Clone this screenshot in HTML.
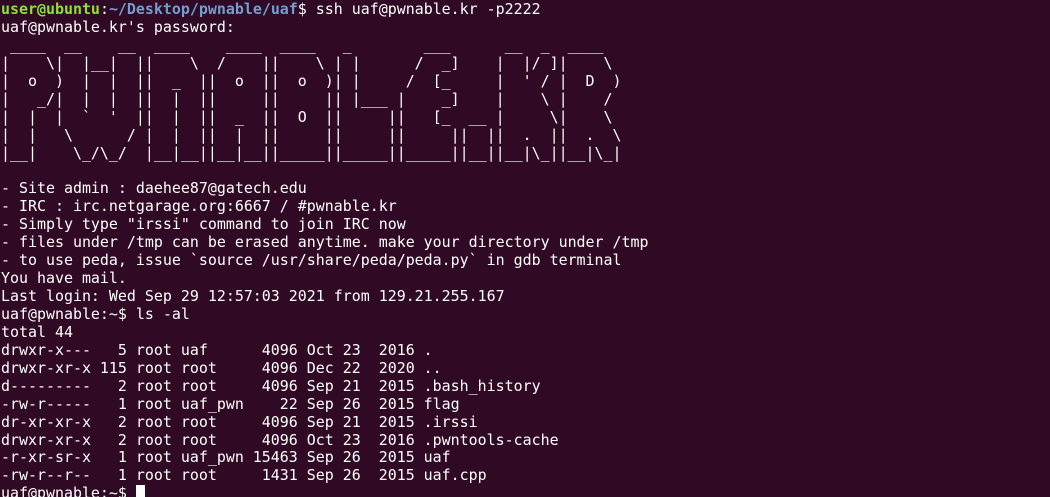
<!DOCTYPE html>
<html><head><meta charset="utf-8"><style>
html,body{margin:0;padding:0;background:#300a24;width:1050px;height:497px;overflow:hidden}
pre{margin:0;padding:1px 0 0 1px;font-family:"DejaVu Sans Mono","Liberation Mono",monospace;font-size:14.95px;line-height:17.93px;color:#ffffff;}
.g{color:#8ae234;font-weight:bold}.b{color:#729fcf;font-weight:bold}
.c{display:inline-block;width:9px;height:16px;background:#fff;vertical-align:-3px}
</style></head><body><pre><span class="g">user@ubuntu</span>:<span class="b">~/Desktop/pwnable/uaf</span>$ ssh uaf@pwnable.kr -p2222
uaf@pwnable.kr's password:
 ____  __    __  ____    ____  ____   _        ___      __  _  ____
|    \|  |__|  ||    \  /    ||    \ | |      /  _]    |  |/ ]|    \
|  o  )  |  |  ||  _  ||  o  ||  o  )| |     /  [_     |  ' / |  D  )
|   _/|  |  |  ||  |  ||     ||     || |___ |    _]    |    \ |    /
|  |  |  `  '  ||  |  ||  _  ||  O  ||     ||   [_  __ |     \|    \
|  |   \      / |  |  ||  |  ||     ||     ||     ||  ||  .  ||  .  \
|__|    \_/\_/  |__|__||__|__||_____||_____||_____||__||__|\_||__|\_|

- Site admin : daehee87@gatech.edu
- IRC : irc.netgarage.org:6667 / #pwnable.kr
- Simply type "irssi" command to join IRC now
- files under /tmp can be erased anytime. make your directory under /tmp
- to use peda, issue `source /usr/share/peda/peda.py` in gdb terminal
You have mail.
Last login: Wed Sep 29 12:57:03 2021 from 129.21.255.167
uaf@pwnable:~$ ls -al
total 44
drwxr-x---   5 root uaf      4096 Oct 23  2016 .
drwxr-xr-x 115 root root     4096 Dec 22  2020 ..
d---------   2 root root     4096 Sep 21  2015 .bash_history
-rw-r-----   1 root uaf_pwn    22 Sep 26  2015 flag
dr-xr-xr-x   2 root root     4096 Sep 21  2015 .irssi
drwxr-xr-x   2 root root     4096 Oct 23  2016 .pwntools-cache
-r-xr-sr-x   1 root uaf_pwn 15463 Sep 26  2015 uaf
-rw-r--r--   1 root root     1431 Sep 26  2015 uaf.cpp
uaf@pwnable:~$ <span class="c"></span></pre></body></html>
